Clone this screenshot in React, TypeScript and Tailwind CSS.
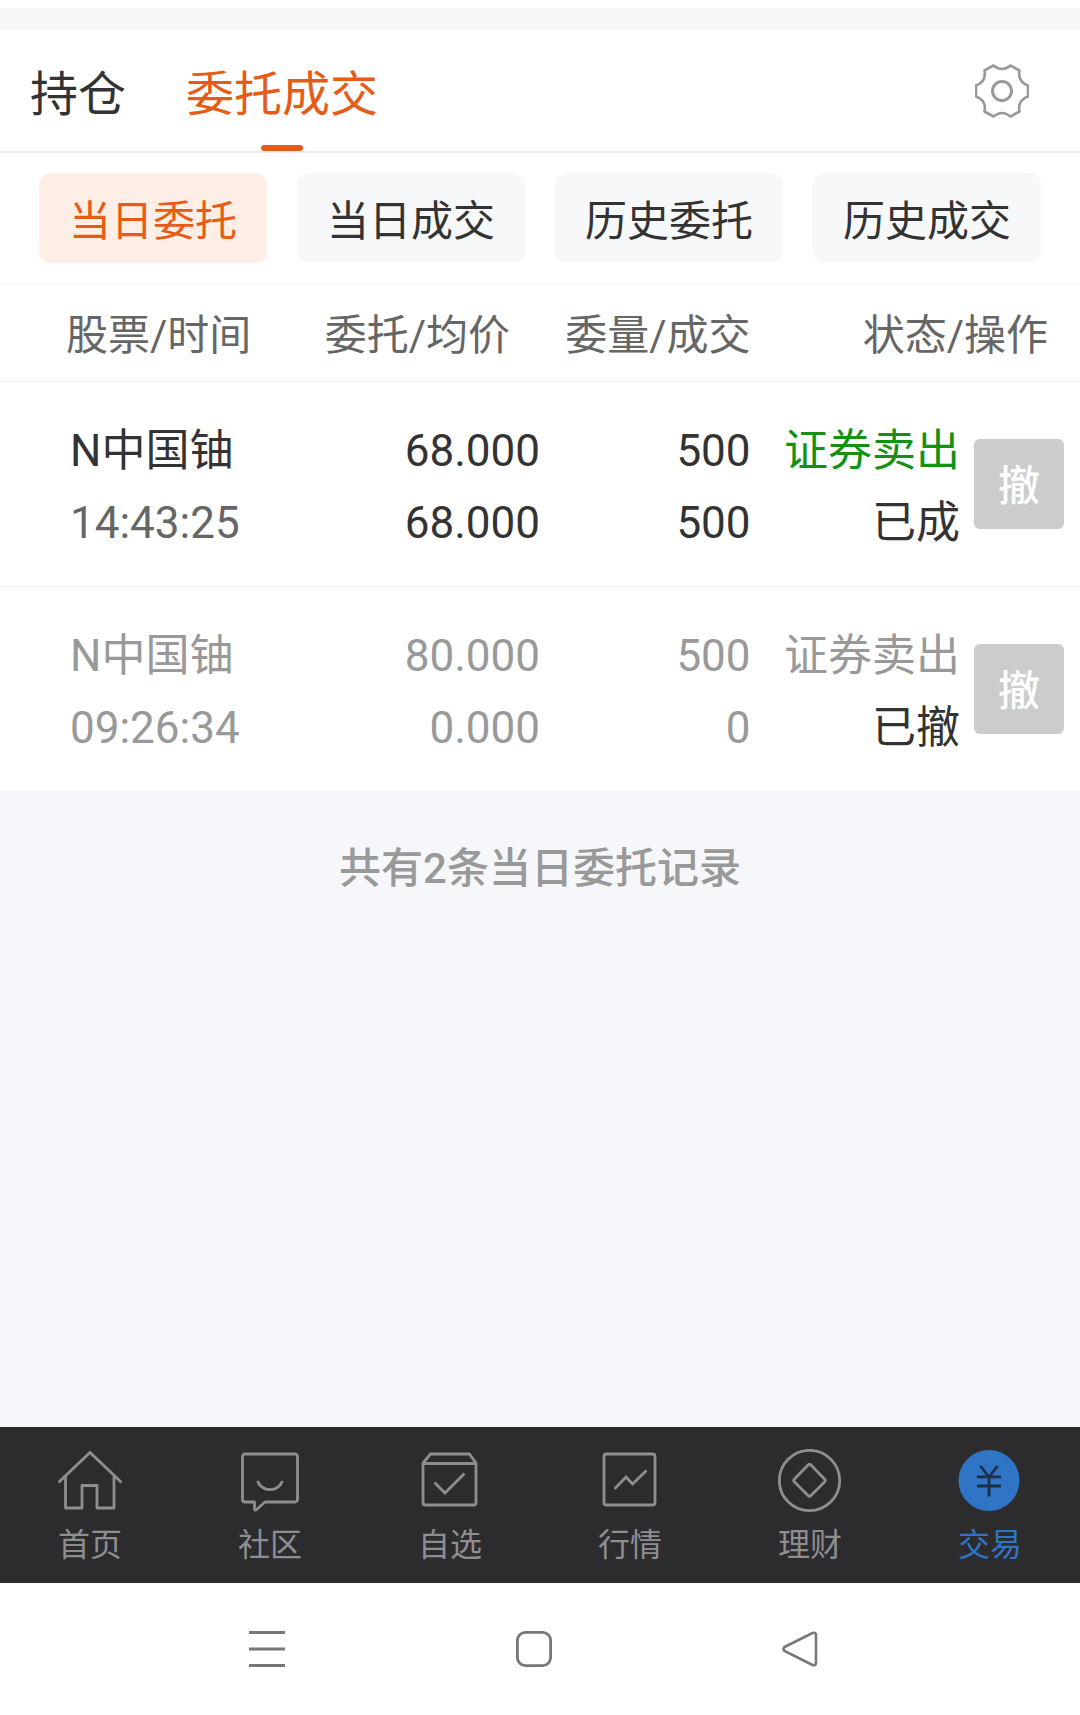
import type { ReactNode } from "react";

type Order = {
  name: string;
  time: string;
  price: string;
  average: string;
  amount: string;
  filled: string;
  side: string;
  status: string;
  cancelled: boolean;
};

const filters = ["当日委托", "当日成交", "历史委托", "历史成交"];

const orders: Order[] = [
  {
    name: "N中国铀",
    time: "14:43:25",
    price: "68.000",
    average: "68.000",
    amount: "500",
    filled: "500",
    side: "证券卖出",
    status: "已成",
    cancelled: false,
  },
  {
    name: "N中国铀",
    time: "09:26:34",
    price: "80.000",
    average: "0.000",
    amount: "500",
    filled: "0",
    side: "证券卖出",
    status: "已撤",
    cancelled: true,
  },
];

function NavIcon({ children }: { children: ReactNode }) {
  return (
    <svg
      viewBox="0 0 64 64"
      className="size-16"
      fill="none"
      stroke="currentColor"
      strokeWidth="2.8"
      strokeLinejoin="round"
      aria-hidden="true"
    >
      {children}
    </svg>
  );
}

const navItems: { label: string; active?: boolean; icon: ReactNode }[] = [
  {
    label: "首页",
    icon: (
      <>
        <path d="M0.5 33.5 32 3.5l31.500 30" strokeLinejoin="miter" />
        <path d="M7.500 27.500v31.500h16.500V36.500h15V59h17V27.500" />
      </>
    ),
  },
  {
    label: "社区",
    icon: (
      <>
        <path d="M7 5h50a2.500 2.500 0 0 1 2.500 2.500v43a2.500 2.500 0 0 1-2.500 2.500H27l-9 8c-.8.500-1.500 0-1.500-1V53H7a2.500 2.500 0 0 1-2.500-2.500v-43A2.500 2.500 0 0 1 7 5z" />
        <path d="M19.500 32c5 11.500 20 11.500 25 0" />
      </>
    ),
  },
  {
    label: "自选",
    icon: (
      <>
        <path d="M5 14 12.500 5h39L58 14v39.500a2.500 2.500 0 0 1-2.500 2.500h-48A2.500 2.500 0 0 1 5 53.500zM5 14.500h53" />
        <path d="M16.500 33.500 27 44l19.500-19.500" strokeLinejoin="miter" />
      </>
    ),
  },
  {
    label: "行情",
    icon: (
      <>
        <rect x="6" y="5" width="51" height="51" rx="2.5" />
        <path d="M16.500 40 28 28l6.500 7L48.500 21.500" strokeLinejoin="miter" />
      </>
    ),
  },
  {
    label: "理财",
    icon: (
      <>
        <circle cx="31.500" cy="31.500" r="30.200" />
        <path d="M30 16 16.500 30q-1.500 1.500 0 3L30 46.500q1.500 1.500 3 0L46.500 33q1.500-1.500 0-3L33 16q-1.500-1.500-3 0z" />
      </>
    ),
  },
  {
    label: "交易",
    active: true,
    icon: (
      <>
        <circle cx="31" cy="31.500" r="30.500" fill="currentColor" stroke="none" />
        <path
          d="M22.500 17 31 28l8.500-11M31 27v20.500M19 27.800h24M19 37h24"
          stroke="#1c2f49"
          strokeLinejoin="miter"
        />
      </>
    ),
  },
];

export default function App() {
  return (
    <div className="flex min-h-screen flex-col bg-white pt-2 font-['Roboto','Noto_Sans_CJK_SC',sans-serif] text-[#333333]">
      <div className="h-[23px] bg-[#f7f8fa]" />

      <header className="flex h-[122px] items-stretch justify-between border-b-2 border-[#ebebeb] pr-[51px] pl-[30px]">
        <div className="flex gap-[60px] text-5xl" role="tablist">
          <button type="button" role="tab" aria-selected="false" className="pt-2">
            持仓
          </button>
          <button type="button" role="tab" aria-selected="true" className="relative pt-2 text-[#e65b16]">
            委托成交
            <span className="absolute bottom-0 left-1/2 h-1.5 w-[42px] -translate-x-1/2 rounded-full bg-[#e65b16]" />
          </button>
        </div>
        <button type="button" aria-label="设置">
          <svg
            viewBox="-27 -27 54 54"
            className="size-[54px]"
            fill="none"
            stroke="#999999"
            strokeLinejoin="round"
            aria-hidden="true"
          >
            <path
              strokeWidth="2.6"
              d="M-8.500-25.500Q0-18.500 8.500-25.500L17.500-20.500C16-13 19-8 26-5.500V5.500C19 8 16 13 17.500 20.500L8.500 25.500Q0 18.500-8.500 25.500L-17.500 20.500C-16 13-19 8-26 5.500V-5.500C-19-8-16-13-17.500-20.500z"
            />
            <circle r="9.500" strokeWidth="3" />
          </svg>
        </button>
      </header>

      <div className="grid grid-cols-4 gap-[30px] border-b border-[#f7f7f7] px-[39px] py-5 text-[42px]">
        {filters.map((label, i) => (
          <button
            key={label}
            type="button"
            aria-pressed={i === 0}
            className={
              i === 0
                ? "h-[90px] rounded-xl bg-[#feeee6] pt-1.5 text-[#e65b16]"
                : "h-[90px] rounded-xl bg-[#f7f8fa] pt-1.5"
            }
          >
            {label}
          </button>
        ))}
      </div>

      <table className="w-full table-fixed border-collapse">
        <colgroup>
          <col className="w-[26%]" />
          <col className="w-[24%]" />
          <col className="w-[19.5%]" />
          <col />
          <col className="w-[120px]" />
        </colgroup>
        <thead>
          <tr className="h-[97px] border-b border-[#f2f2f2] text-[42px] whitespace-nowrap text-[#666666]">
            <th className="pt-1.5 pl-[66px] text-left font-normal">股票/时间</th>
            <th className="pt-1.5 pr-[30px] text-right font-normal">委托/均价</th>
            <th className="pt-1.5 text-right font-normal">委量/成交</th>
            <th colSpan={2} className="pt-1.5 pr-8 text-right font-normal">
              状态/操作
            </th>
          </tr>
        </thead>
        <tbody className="text-right text-[44px] leading-[72px] whitespace-nowrap">
          {orders.map((o) => (
            <tr
              key={o.time}
              className={
                o.cancelled
                  ? "h-[205px] text-[#999999]"
                  : "h-[205px] border-b border-[#f2f2f2]"
              }
            >
              <td className="pt-1.5 pl-[70px] text-left">
                <div>{o.name}</div>
                <div className={o.cancelled ? "" : "text-[#666666]"}>{o.time}</div>
              </td>
              <td className="pt-1.5">
                <div>{o.price}</div>
                <div>{o.average}</div>
              </td>
              <td className="pt-1.5">
                <div>{o.amount}</div>
                <div>{o.filled}</div>
              </td>
              <td className="pt-1.5">
                <div className={o.cancelled ? "" : "text-[#149014]"}>{o.side}</div>
                <div className="text-[#333333]">{o.status}</div>
              </td>
              <td className="pr-4 align-middle">
                <button
                  type="button"
                  className="ml-auto block size-[90px] rounded-md bg-[#cccccc] pt-1.5 text-[42px] font-medium text-white"
                >
                  撤
                </button>
              </td>
            </tr>
          ))}
        </tbody>
      </table>

      <main className="flex-1 bg-[#f6f7fa] pt-12 text-center text-[42px] leading-[60px] font-medium text-[#999999]">
        共有2条当日委托记录
      </main>

      <nav className="grid h-[156px] grid-cols-6 bg-[#2c2c2e] text-[32px] leading-10">
        {navItems.map(({ label, active, icon }) => (
          <a
            key={label}
            href="#"
            aria-current={active ? "page" : undefined}
            className={
              active
                ? "flex flex-col items-center gap-3 pt-[22px] text-[#2f74c5]"
                : "flex flex-col items-center gap-3 pt-[22px] text-[#8e8e92]"
            }
          >
            <NavIcon>{icon}</NavIcon>
            {label}
          </a>
        ))}
      </nav>

      <div className="flex h-[132px] items-center justify-between pr-[262px] pl-[249px] text-[#777777]">
        <button type="button" aria-label="最近任务">
          <svg viewBox="0 0 36 36" className="size-9" stroke="currentColor" strokeWidth="3" aria-hidden="true">
            <path d="M0 1.500h36M0 18h36M0 34.500h36" />
          </svg>
        </button>
        <button type="button" aria-label="主屏幕">
          <svg viewBox="0 0 36 36" className="size-9" fill="none" stroke="currentColor" strokeWidth="2.8" aria-hidden="true">
            <rect x="1.400" y="1.400" width="33.200" height="33.200" rx="8" />
          </svg>
        </button>
        <button type="button" aria-label="返回">
          <svg viewBox="0 0 36 36" className="size-9" fill="none" stroke="currentColor" strokeWidth="2.6" aria-hidden="true">
            <path d="M2.500 16 30.500 2q3.500-1 3.500 2.500v27q0 3.500-3.500 2.500L2.500 20q-2-2 0-4z" />
          </svg>
        </button>
      </div>
    </div>
  );
}
